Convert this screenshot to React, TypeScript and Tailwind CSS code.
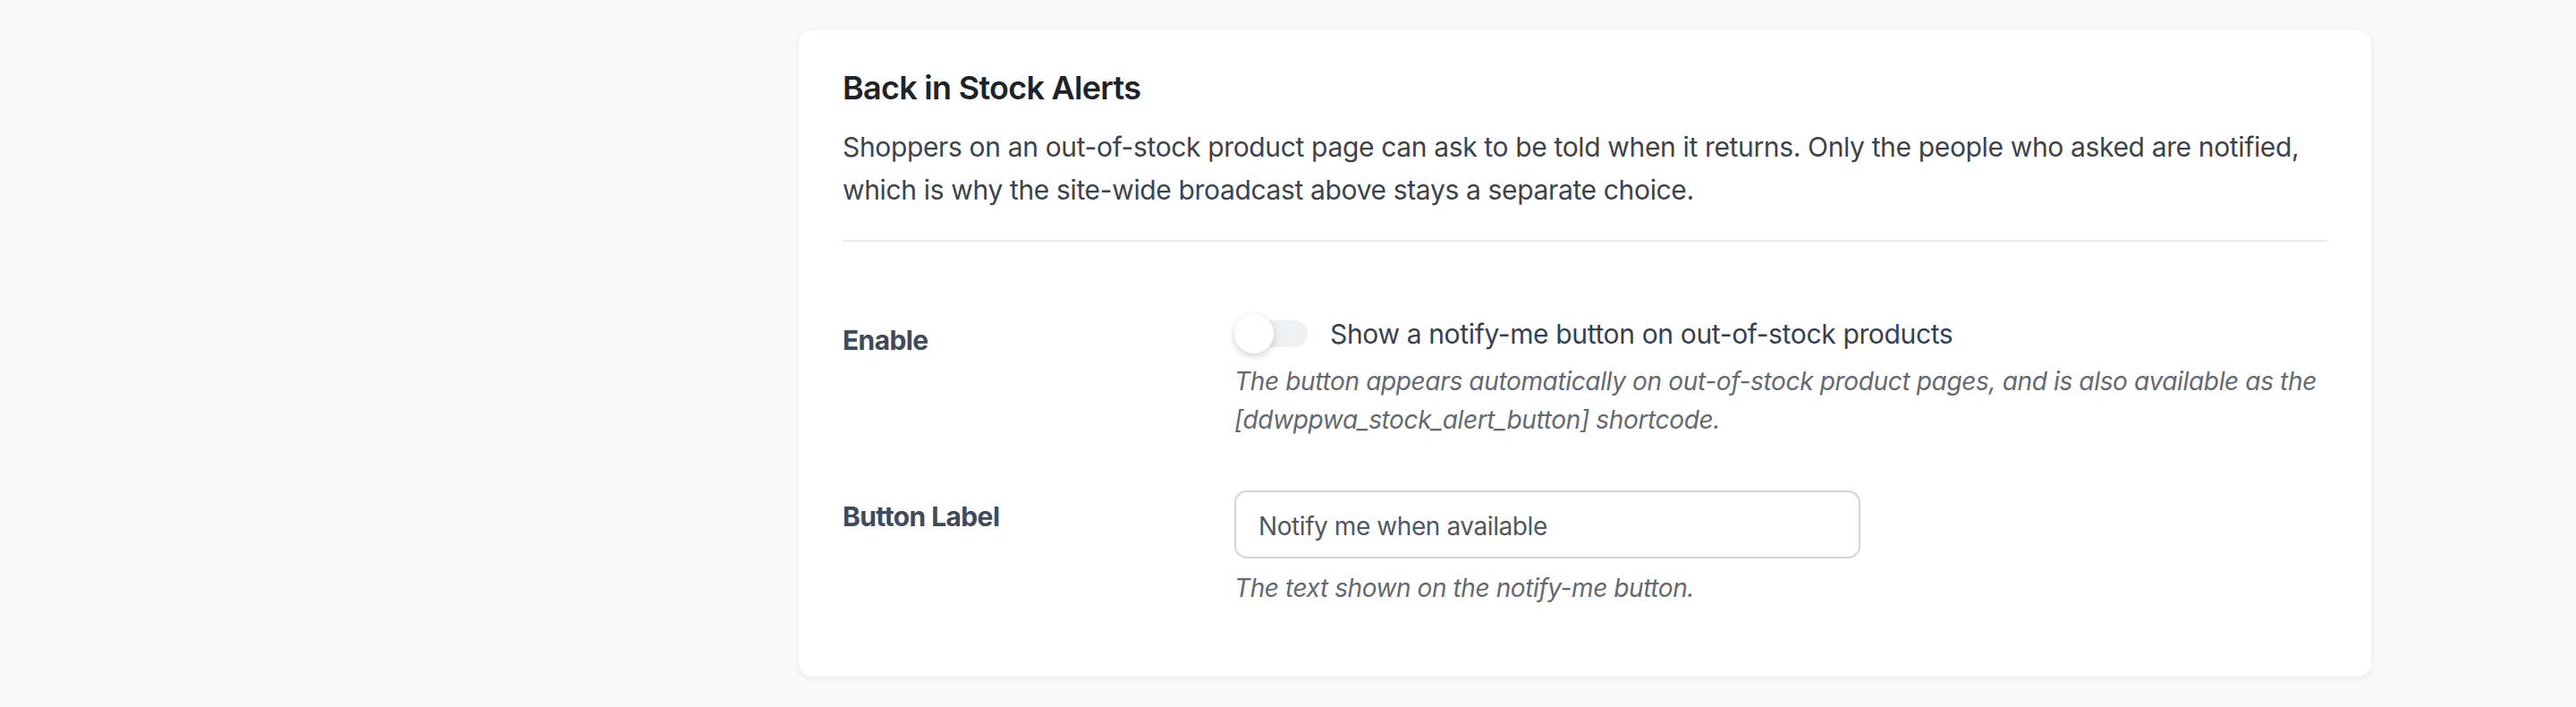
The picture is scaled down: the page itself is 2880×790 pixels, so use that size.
import { useState } from "react";

const Toggle = ({ on, toggle }: { on: boolean; toggle: () => void }) => (
  <button
    onClick={toggle}
    className="relative w-[82px] h-[44px] shrink-0 flex items-center"
  >
    <span
      className={
        on
          ? "block w-full h-[30px] rounded-full bg-[#2271b1]"
          : "block w-full h-[30px] rounded-full bg-[#eef1f4]"
      }
    />
    <span
      className={
        on
          ? "absolute top-0 right-0 w-[44px] h-[44px] rounded-full bg-white shadow-[0_3px_8px_rgba(0,0,0,0.18)]"
          : "absolute top-0 left-0 w-[44px] h-[44px] rounded-full bg-white shadow-[0_3px_8px_rgba(0,0,0,0.18)]"
      }
    />
  </button>
);

const App = () => {
  const [enabled, setEnabled] = useState(false);
  const [label, setLabel] = useState("Notify me when available");

  return (
    <div
      className="min-h-[790px] bg-[#f8f9fb] flex pt-[32px] tracking-[-0.022em]"
      style={{ fontFamily: "Inter, 'Noto Sans', sans-serif" }}
    >
      <div className="w-[892px] shrink-0" />
      <div className="w-[1760px] h-[725px] bg-white rounded-[16px] border border-[#f0f1f3] shadow-[0_2px_6px_rgba(0,0,0,0.05)] px-[49px] pt-[44px]">
        <h2 className="text-[36px] leading-[43px] font-semibold tracking-[-0.02em] text-[#1d2327]">
          Back in Stock Alerts
        </h2>
        <p className="mt-[20px] text-[30px] leading-[48px] text-[#3c434a]">
          Shoppers on an out-of-stock product page can ask to be told when it
          returns. Only the people who asked are notified, which is why the
          site-wide broadcast above stays a separate choice.
        </p>
        <div className="mt-[32px] h-[2px] bg-[#e8e9eb]" />

        <div className="flex mt-[79px]">
          <div className="w-[438px] shrink-0 pt-[11px] text-[30px] leading-[40px] font-bold tracking-[-0.02em] text-[#3f4a5a]">
            Enable
          </div>
          <div className="flex-1">
            <div className="flex items-center gap-[25px] h-[48px]">
              <Toggle on={enabled} toggle={() => setEnabled(!enabled)} />
              <span className="text-[30px] leading-[48px] text-[#354152]">
                Show a notify-me button on out-of-stock products
              </span>
            </div>
            <p className="mt-[8px] text-[28px] leading-[43px] italic text-[#646970]">
              The button appears automatically on out-of-stock product pages,
              and is also available as the [ddwppwa_stock_alert_button]
              shortcode.
            </p>
          </div>
        </div>

        <div className="flex mt-[57px]">
          <div className="w-[438px] shrink-0 pt-[9px] text-[30px] leading-[40px] font-bold tracking-[-0.02em] text-[#3f4a5a]">
            Button Label
          </div>
          <div className="flex-1">
            <input
              value={label}
              onChange={(e) => setLabel(e.target.value)}
              className="block w-[700px] h-[76px] px-[25px] pt-[3px] rounded-[14px] border-2 border-[#d4d4d6] bg-white text-[28px] tracking-[-0.015em] text-[#50575e] outline-none"
            />
            <p className="mt-[12px] text-[28px] leading-[43px] italic tracking-[-0.015em] text-[#646970]">
              The text shown on the notify-me button.
            </p>
          </div>
        </div>
      </div>
    </div>
  );
};

export default App;
